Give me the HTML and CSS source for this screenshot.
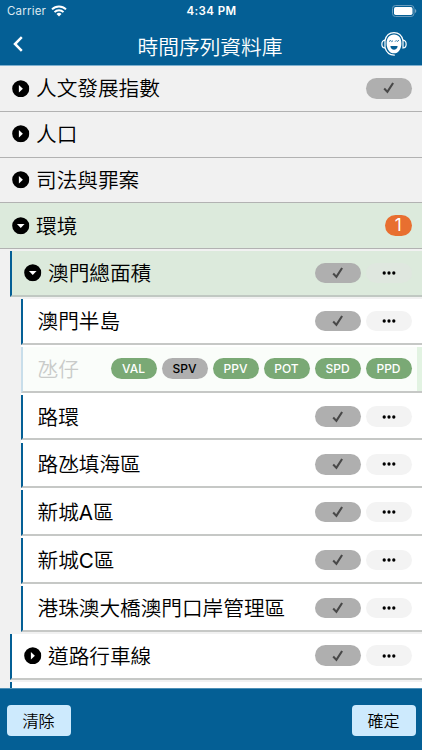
FILE: index.html
```html
<!DOCTYPE html>
<html lang="zh-Hant">
<head>
<meta charset="utf-8">
<meta name="viewport" content="width=device-width, initial-scale=1">
<title>時間序列資料庫</title>
<link rel="stylesheet" href="styles.css">
</head>
<body>
<svg class="defs" aria-hidden="true">
  <symbol id="right" viewBox="0 0 18 18"><circle cx="9" cy="9" r="8.8"/><path d="M7.1 5.1v7.8L11.2 9z" fill="#fff"/></symbol>
  <symbol id="down" viewBox="0 0 18 18"><circle cx="9" cy="9" r="8.8"/><path d="M5.1 7.3h7.8L9 11.2z" fill="#fff"/></symbol>
  <symbol id="check" viewBox="0 0 12 12"><path d="M1.2 6.6 4.4 9.9 10.1 1" fill="none" stroke="#484848" stroke-width="2.1"/></symbol>
  <symbol id="dots" viewBox="0 0 14 4"><circle cx="2.2" cy="2" r="1.65"/><circle cx="7" cy="2" r="1.65"/><circle cx="11.8" cy="2" r="1.65"/></symbol>
</svg>
<div class="app">
  <header class="header">
    <div class="status">
      <div class="carrier">Carrier
        <svg class="wifi" viewBox="0 0 16 12"><g fill="none" stroke="#fff" stroke-width="2"><path d="M1 4.4a10 10 0 0 1 14 0"/><path d="M3.5 7.1a6.4 6.4 0 0 1 9 0"/></g><path d="M8 11.6 5.5 9a3.6 3.6 0 0 1 5 0z" fill="#fff"/></svg>
      </div>
      <div class="time">4:34 PM</div>
      <svg class="battery" viewBox="0 0 25 12"><rect x=".5" y=".5" width="21.5" height="11" rx="3" fill="none" stroke="#6a9cbd"/><rect x="2" y="2" width="18.5" height="8" rx="1.7" fill="#fff"/><path d="M23.2 4v4c1.4-.7 1.4-3.3 0-4z" fill="#8fb4cd"/></svg>
    </div>
    <div class="nav">
      <svg class="back" viewBox="0 0 10 16"><path d="M8.8 1.2 2 8l6.8 6.8" fill="none" stroke="#fff" stroke-width="2.5"/></svg>
      <h1 class="title">時間序列資料庫</h1>
      <svg class="agent" viewBox="0 0 26 24"><g fill="none" stroke="#fff" stroke-width="1.2"><path d="M4 8.3C5.2 3.5 8.8.7 13 .7s7.8 2.8 9 7.600"/><path d="M4 8.2C-.2 8.8-.2 15.7 4 16zM22 8.2c4.2.6 4.2 7.500 0 7.800z"/><path d="M4 15.800c1.500 4.800 5.200 7.500 9.800 7.300"/></g><path d="M13 2.600c-4.800 0-7.400 3.500-7.400 8.800 0 5.500 3 9.900 7.400 9.900s7.400-4.400 7.400-9.900c0-5.300-2.600-8.800-7.400-8.800z" fill="#fff"/><path d="M8 9.500 9.800 8.500l1 1.200 1.200-1.100M14 9.700l1.200-1.200 1 1L18 8.200" fill="none" stroke="#045f95" stroke-width=".8"/><path d="M9.400 14h7.200c-.2 5-7 5-7.200 0z" fill="#045f95"/></svg>
    </div>
  </header>

  <main class="list">
    <div class="row top"><svg class="arrow"><use href="#right"/></svg><span class="label">人文發展指數</span><span class="pill select"><svg class="tick"><use href="#check"/></svg></span></div>
    <div class="row top"><svg class="arrow"><use href="#right"/></svg><span class="label">人口</span></div>
    <div class="row top"><svg class="arrow"><use href="#right"/></svg><span class="label">司法與罪案</span></div>
    <div class="row top open"><svg class="arrow"><use href="#down"/></svg><span class="label">環境</span><span class="count">1</span></div>
    <div class="group">
      <div class="row sub open"><svg class="arrow"><use href="#down"/></svg><span class="label">澳門總面積</span><span class="pill select"><svg class="tick"><use href="#check"/></svg></span><span class="pill more"><svg class="dots"><use href="#dots"/></svg></span></div>
      <div class="leaves">
        <div class="row sub leaf"><span class="label">澳門半島</span><span class="pill select"><svg class="tick"><use href="#check"/></svg></span><span class="pill more"><svg class="dots"><use href="#dots"/></svg></span></div>
        <div class="row sub leaf swiped"><span class="label">氹仔</span><span class="pill tag">VAL</span><span class="pill tag off">SPV</span><span class="pill tag">PPV</span><span class="pill tag">POT</span><span class="pill tag">SPD</span><span class="pill tag">PPD</span></div>
        <div class="row sub leaf"><span class="label">路環</span><span class="pill select"><svg class="tick"><use href="#check"/></svg></span><span class="pill more"><svg class="dots"><use href="#dots"/></svg></span></div>
        <div class="row sub leaf"><span class="label">路氹填海區</span><span class="pill select"><svg class="tick"><use href="#check"/></svg></span><span class="pill more"><svg class="dots"><use href="#dots"/></svg></span></div>
        <div class="row sub leaf"><span class="label">新城<span class="latin">A</span>區</span><span class="pill select"><svg class="tick"><use href="#check"/></svg></span><span class="pill more"><svg class="dots"><use href="#dots"/></svg></span></div>
        <div class="row sub leaf"><span class="label">新城<span class="latin">C</span>區</span><span class="pill select"><svg class="tick"><use href="#check"/></svg></span><span class="pill more"><svg class="dots"><use href="#dots"/></svg></span></div>
        <div class="row sub leaf"><span class="label">港珠澳大橋澳門口岸管理區</span><span class="pill select"><svg class="tick"><use href="#check"/></svg></span><span class="pill more"><svg class="dots"><use href="#dots"/></svg></span></div>
      </div>
      <div class="row sub"><svg class="arrow"><use href="#right"/></svg><span class="label">道路行車線</span><span class="pill select"><svg class="tick"><use href="#check"/></svg></span><span class="pill more"><svg class="dots"><use href="#dots"/></svg></span></div>
      <div class="row sub"></div>
    </div>
  </main>

  <footer class="footer"><button class="btn">清除</button><button class="btn">確定</button></footer>
</div>
</body>
</html>
```

FILE: styles.css
```css
* { box-sizing: border-box; }
body { margin: 0; font-family: Inter, "Noto Sans CJK TC", sans-serif; color: #000; }
.defs { display: none; }
.app { display: flex; flex-direction: column; width: 422px; height: 750px; overflow: hidden; background: #f1f1f1; }

.header { flex: none; height: 66px; background: #045f95; border-bottom: 1px solid #7fb0cf; color: #fff; }
.status { display: grid; grid-template-columns: 1fr auto 1fr; align-items: center; height: 22px; padding: 0 6px 0 7px; font-size: 11.5px; }
.carrier { display: flex; align-items: center; gap: 5px; color: #dbe8f0; letter-spacing: .2px; }
.wifi { width: 16px; height: 12px; }
.time { font-weight: 600; letter-spacing: .4px; }
.battery { justify-self: end; width: 25px; height: 12px; margin-right: -1px; }
.nav { display: grid; grid-template-columns: 1fr auto 1fr; align-items: center; height: 43px; padding: 0 15px 0 13px; }
.back { width: 10px; height: 16px; }
.title { margin: 8px 0 0; font-size: 20.7px; line-height: 30px; font-weight: 350; }
.agent { justify-self: end; width: 26px; height: 24px; }

.list { flex: 1; min-height: 0; overflow: hidden; }
.row { display: flex; align-items: center; gap: 5px; padding-right: 10.5px; }
.top { height: 45.8px; padding-left: 12px; border-bottom: 1px solid #b2b2b2; }
.open { background: #dceadc; }
.arrow { flex: none; width: 17.5px; height: 17.5px; }
.label { margin-right: auto; font-size: 20.65px; line-height: 30px; font-weight: 350; white-space: nowrap; padding: 2px 0 0 1.5px; }
.latin { font-weight: 400; }

.group { margin-left: 10px; padding-top: 2px; }
.sub { height: 45.7px; margin-bottom: 2.15px; padding-left: 12px; border-left: 2px solid #045f95; border-bottom: 2px solid #c6c8c6; background: #fff; }
.sub.open { background: #dceadc; border-bottom-color: #c0c8c2; }
.leaves { margin-left: 10.5px; background: #fff; }
.leaf { padding-left: 13.5px; }
.sub.swiped { background: linear-gradient(90deg, #fafdfa 0 calc(100% - 5px), #e2f3e2 calc(100% - 5px)); border-left-color: #c8deea; }
.swiped .label { color: #c9cbc9; }

.pill { display: flex; flex: none; align-items: center; justify-content: center; width: 46px; height: 20.5px; border-radius: 11px; font-size: 12px; }
.select { background: #afafaf; }
.more { background: #f3f3f3; }
.open .more { background: #dfe7df; }
.tick { width: 12px; height: 12px; }
.dots { width: 14px; height: 4px; }
.tag { background: #7aa975; color: #fff; font-weight: 500; }
.off { background: #afafaf; color: #000; }
.count { width: 26.5px; height: 21px; border-radius: 11px; background: #e86f30; color: #fff; font-size: 17px; font-weight: 400; line-height: 21px; text-align: center; }

.footer { flex: none; display: flex; justify-content: space-between; height: 62px; padding: 15.5px 6.5px 0; background: #045f95; border-top: 1px solid #4d8fb6; }
.btn { width: 64px; height: 31px; padding: 0; border: 0; border-radius: 4px; background: #cdeafd; color: #000; font: 350 16px/30px "Noto Sans CJK TC", sans-serif; }
```
